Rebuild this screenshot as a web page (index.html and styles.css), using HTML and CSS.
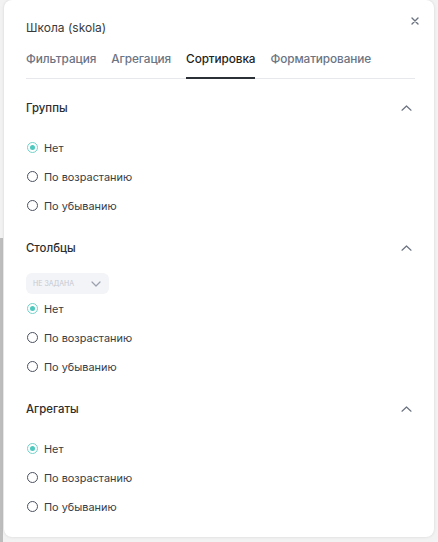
FILE: index.html
```html
<!DOCTYPE html>
<html lang="ru">
<head>
<meta charset="utf-8">
<link rel="stylesheet" href="styles.css">
</head>
<body>
<div class="backdrop">
  <div class="strip"></div>
  <div class="modal">
    <div class="head">
      <div class="title">Школа (skola)</div>
      <button class="close" aria-label="close">
        <svg width="8" height="8" viewBox="0 0 8 8"><path d="M1 1L7 7M7 1L1 7" stroke="#6b7280" stroke-width="1.4" stroke-linecap="round"/></svg>
      </button>
      <div class="tabs">
        <div class="tab">Фильтрация</div>
        <div class="tab">Агрегация</div>
        <div class="tab active">Сортировка</div>
        <div class="tab">Форматирование</div>
      </div>
    </div>

    <div class="section">
      <div class="sec-head">
        <span>Группы</span>
        <svg class="chev" width="11" height="6" viewBox="0 0 11 6"><path d="M1 5.2L5.5 1L10 5.2" fill="none" stroke="#6b7280" stroke-width="1.2" stroke-linecap="round" stroke-linejoin="round"/></svg>
      </div>
      <div class="radios">
        <label class="radio"><span class="dot checked"></span>Нет</label>
        <label class="radio"><span class="dot"></span>По возрастанию</label>
        <label class="radio"><span class="dot"></span>По убыванию</label>
      </div>
    </div>

    <div class="section">
      <div class="sec-head">
        <span>Столбцы</span>
        <svg class="chev" width="11" height="6" viewBox="0 0 11 6"><path d="M1 5.2L5.5 1L10 5.2" fill="none" stroke="#6b7280" stroke-width="1.2" stroke-linecap="round" stroke-linejoin="round"/></svg>
      </div>
      <div class="select">
        <span>НЕ ЗАДАНА</span>
        <svg width="10" height="6" viewBox="0 0 10 6"><path d="M1 1L5 5L9 1" fill="none" stroke="#9aa1ad" stroke-width="1.2" stroke-linecap="round" stroke-linejoin="round"/></svg>
      </div>
      <div class="radios tight">
        <label class="radio"><span class="dot checked"></span>Нет</label>
        <label class="radio"><span class="dot"></span>По возрастанию</label>
        <label class="radio"><span class="dot"></span>По убыванию</label>
      </div>
    </div>

    <div class="section">
      <div class="sec-head">
        <span>Агрегаты</span>
        <svg class="chev" width="11" height="6" viewBox="0 0 11 6"><path d="M1 5.2L5.5 1L10 5.2" fill="none" stroke="#6b7280" stroke-width="1.2" stroke-linecap="round" stroke-linejoin="round"/></svg>
      </div>
      <div class="radios">
        <label class="radio"><span class="dot checked"></span>Нет</label>
        <label class="radio"><span class="dot"></span>По возрастанию</label>
        <label class="radio"><span class="dot"></span>По убыванию</label>
      </div>
    </div>
  </div>
</div>
</body>
</html>
```

FILE: styles.css
```css
* { box-sizing: border-box; }
html, body { margin: 0; padding: 0; }
body {
  width: 438px;
  height: 542px;
  overflow: hidden;
  background: #efefef;
  font-family: Inter, "Noto Sans", sans-serif;
  color: #333;
}
.backdrop {
  position: relative;
  width: 438px;
  height: 542px;
  background: #f2f2f2;
}
.strip {
  position: absolute;
  left: 0;
  top: 238px;
  width: 3px;
  height: 304px;
  background: #bdbdbd;
}
.modal {
  position: absolute;
  left: 4px;
  top: 0;
  width: 430px;
  height: 537px;
  background: #fff;
  border-radius: 8px;
  box-shadow: 0 0 3px rgba(0,0,0,0.12);
  padding: 0 22px;
}
.head {
  position: relative;
  padding-top: 20px;
}
.title {
  font-size: 12px;
  line-height: 16px;
  color: #3a3a3a;
  font-weight: 400;
}
.close {
  position: absolute;
  right: -11px;
  top: 13px;
  width: 16px;
  height: 16px;
  border: 0;
  background: none;
  padding: 0;
  display: flex;
  align-items: center;
  justify-content: center;
}
.tabs {
  display: flex;
  gap: 15px;
  margin-top: 15px;
  margin-right: -3px;
  border-bottom: 1px solid #e6e8ec;
}
.tab {
  font-size: 11.8px;
  line-height: 16px;
  font-weight: 500;
  color: #6b7483;
  padding-bottom: 10px;
  margin-bottom: -1px;
  border-bottom: 2px solid transparent;
  letter-spacing: -0.1px;
}
.tab.active {
  color: #1f1f1f;
  border-bottom-color: #2b2f36;
}
.section {
  padding-top: 21px;
}
.section + .section {
  padding-top: 20px;
}
.sec-head {
  display: flex;
  justify-content: space-between;
  align-items: center;
  height: 16px;
  font-size: 11.4px;
  font-weight: 500;
  color: #2e2e2e;
}
.chev { margin-right: 0; }
.radios {
  margin-top: 17px;
  display: flex;
  flex-direction: column;
}
.radios.tight { margin-top: 0; }
.radio {
  display: flex;
  align-items: center;
  height: 29px;
  font-size: 10.9px;
  color: #373c45;
  gap: 6px;
}
.dot {
  width: 11px;
  height: 11px;
  border-radius: 50%;
  border: 1px solid #4b5260;
  margin-left: 1px;
  display: flex;
  align-items: center;
  justify-content: center;
}
.dot.checked {
  border-color: #6fd3cb;
}
.dot.checked::after {
  content: "";
  width: 5px;
  height: 5px;
  border-radius: 50%;
  background: #4fc9bf;
}
.select {
  margin-top: 17px;
  width: 83px;
  height: 21px;
  border-radius: 6px;
  background: #f3f4f8;
  display: flex;
  align-items: center;
  justify-content: space-between;
  padding: 0 8px 0 7px;
  font-size: 7px;
  color: #c5c9d1;
  letter-spacing: 0;
}
```
